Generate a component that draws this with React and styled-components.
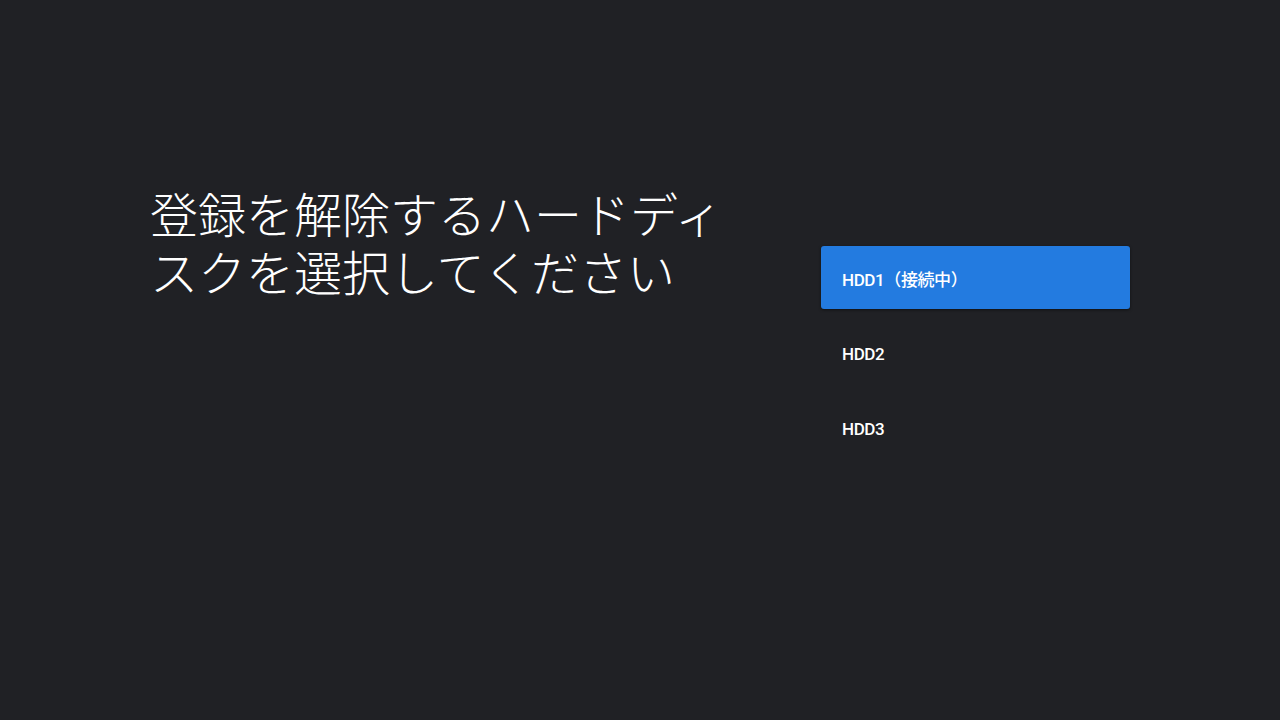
import React from "react";
import styled, { createGlobalStyle } from "styled-components";

const GlobalStyle = createGlobalStyle`
  html, body {
    margin: 0;
    padding: 0;
    background: #202125;
  }
`;

const Screen = styled.div`
  width: 1280px;
  height: 720px;
  background: #202125;
  display: flex;
  box-sizing: border-box;
  padding: 183px 150px 0 150px;
  justify-content: space-between;
  font-family: Roboto, "Noto Sans CJK JP", sans-serif;
`;

const Title = styled.h1`
  margin: 0;
  width: 590px;
  font-family: "Noto Sans CJK JP", sans-serif;
  font-weight: 300;
  font-size: 48px;
  line-height: 58px;
  color: #ffffff;
`;

const List = styled.div`
  width: 309px;
  margin-top: 63px;
  display: flex;
  flex-direction: column;
  gap: 12px;
`;

const Item = styled.div`
  height: 63px;
  display: flex;
  align-items: center;
  padding: 2px 21px 0;
  box-sizing: border-box;
  border-radius: 3px;
  font-size: 17px;
  font-weight: 500;
  letter-spacing: -0.4px;
  color: #ffffff;
  background: ${({ selected }) => (selected ? "#237be0" : "transparent")};
  box-shadow: ${({ selected }) => (selected ? "0 1px 3px rgba(0,0,0,0.5)" : "none")};
`;

const drives = [
  { label: "HDD1（接続中）", selected: true },
  { label: "HDD2" },
  { label: "HDD3" },
];

export default function App() {
  return (
    <>
      <GlobalStyle />
      <Screen>
        <Title>登録を解除するハードディスクを選択してください</Title>
        <List>
          {drives.map((d) => (
            <Item key={d.label} selected={d.selected}>
              {d.label}
            </Item>
          ))}
        </List>
      </Screen>
    </>
  );
}
